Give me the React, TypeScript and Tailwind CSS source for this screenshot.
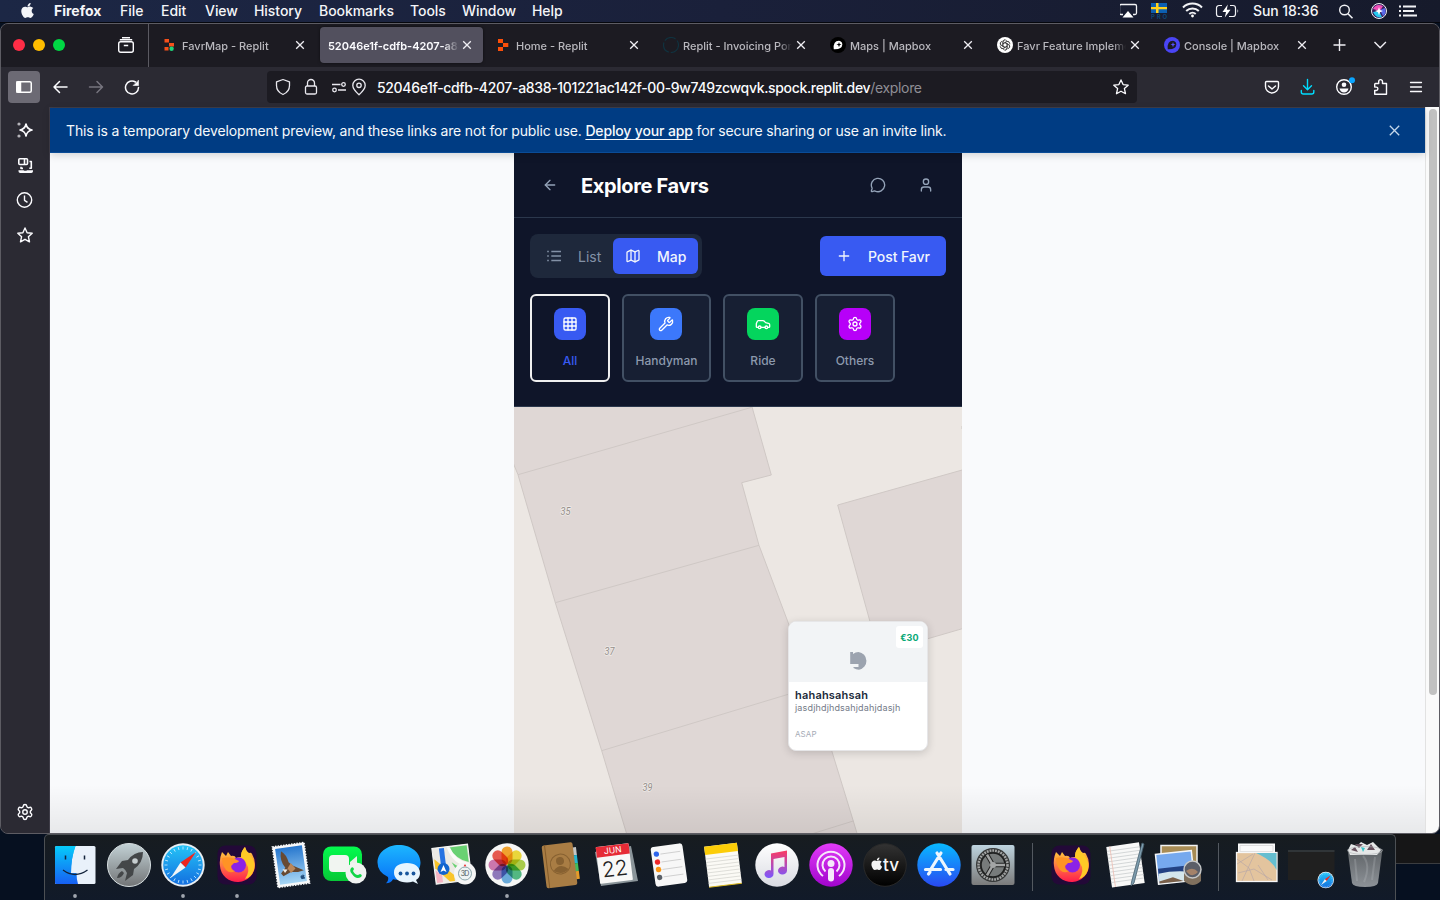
import React from "react";
import { ArrowLeft, Car, Grid3x3, Map as MapIcon, MessageCircle, Plus, Settings, User, Wrench } from "lucide-react";
import { FaApple } from "react-icons/fa";

const menus: [string, string][] = [
  ["File", "w-[41px]"],
  ["Edit", "w-[44px]"],
  ["View", "w-[49px]"],
  ["History", "w-[65px]"],
  ["Bookmarks", "w-[91px]"],
  ["Tools", "w-[52px]"],
  ["Window", "w-[70px]"],
  ["Help", "w-[40px]"],
];

function MenuBar() {
  return (
    <div className="flex h-[23px] shrink-0 items-start border-b border-[#05070d] bg-gradient-to-r from-[#1c2745] via-[#1a203a] to-[#161a2b] text-[14px] font-medium leading-[22px] text-[#f4f5f8]">
      <div className="w-[54px] pl-[19px] pt-[2px]">
        <FaApple size={17} />
      </div>
      <div className="w-[66px] font-bold">Firefox</div>
      {menus.map(([m, w]) => (
        <div key={m} className={`${w} whitespace-nowrap tracking-[-0.050px]`}>{m}</div>
      ))}
      <svg className="ml-auto h-[22px] w-[320px]" viewBox="1120 0 320 22" fill="none" stroke="#f1f2f5">
        <path d="M1123 14.500h-2a1.500 1.500 0 0 1-1.500-1.500V6a1.500 1.500 0 0 1 1.500-1.500h14A1.500 1.500 0 0 1 1136.500 6v7a1.500 1.500 0 0 1-1.500 1.500h-2" strokeWidth="1.300" />
        <path d="M1128 11l5.500 6.500h-11z" fill="#fff" stroke="none" />
        <g stroke="none">
          <rect x="1151" y="3" width="16" height="10" fill="#0c5fb0" />
          <path d="M1151 7h16v2.300h-16zM1156 3h2.500v10h-2.500z" fill="#ffd21c" />
          <text x="1151" y="18.500" fontSize="6" fontWeight="700" fill="#0d4675" textLength="16">PRO</text>
        </g>
        <g strokeWidth="2">
          <path d="M1183 7.500a13.500 13.500 0 0 1 19 0M1186.200 11a9 9 0 0 1 12.600 0M1189.300 14a4.700 4.700 0 0 1 6.400 0" />
          <circle cx="1192.500" cy="16" r="1.400" fill="#fff" stroke="none" />
        </g>
        <path d="M1222 5.500h-3a2.500 2.500 0 0 0-2.500 2.500v6a2.500 2.500 0 0 0 2.500 2.500h3M1230 5.500h3a2.500 2.500 0 0 1 2.500 2.500v6a2.500 2.500 0 0 1-2.500 2.500h-4" strokeWidth="1.200" />
        <path d="M1237.500 9v4q1.500-2 0-4zM1227.800 4.500l-5.300 7.500h3.500l-1.200 5.500 5.700-7.800h-3.700z" fill="#fff" stroke="none" />
        <text x="1253" y="16" fontSize="14" fontWeight="500" fill="#f4f5f8" stroke="none" textLength="65.500">Sun 18:36</text>
        <circle cx="1344.500" cy="10" r="4.800" strokeWidth="1.400" />
        <path d="M1348 13.700l4.500 4.500" strokeWidth="1.600" />
        <circle cx="1379" cy="11" r="7.500" fill="#39205d" strokeWidth="1" />
        <path d="M1373 9q3-6 10-3l-3 5z" fill="#f04fb8" stroke="none" />
        <path d="M1373 12l6-1 3 6q-6 2-9-5z" fill="#26c8ef" stroke="none" />
        <path d="M1380 10l5-2q2 5-2 8z" fill="#5868e8" stroke="none" />
        <path d="M1379 7l1 3 3 1-3 1.200-1 3-1-3-3-1.200 3-1z" fill="#fff" stroke="none" />
        <path d="M1403 6.500h13M1403 11h11M1403 15.500h14" strokeWidth="1.800" />
        <path d="M1399 6.500h2M1399 11h2M1399 15.500h2" strokeWidth="1.800" />
      </svg>
    </div>
  );
}

function CloseX({ className = "" }: { className?: string }) {
  return (
    <svg className={`shrink-0 ${className}`} width="10" height="10" viewBox="0 0 10 10" stroke="#f0eff4" strokeWidth="1.300">
      <path d="M1.200 1.200l7.600 7.600M8.800 1.200L1.200 8.800" />
    </svg>
  );
}

function Favicon({ kind }: { kind: string }) {
  return (
    <svg className="mr-[4px] shrink-0" width="16" height="16" viewBox="0 0 16 16">
      {kind === "favr" && (
        <g>
          <path d="M2.500 2h4.500v3.600H2.500zM7 6h5v3.500H7zM2.500 10h4v3.600h-4z" fill="#f5501b" />
          <circle cx="9.600" cy="11.800" r="2.200" fill="#1fd37a" />
        </g>
      )}
      {kind === "replit" && <path d="M2 2h5v4h5.300v4H7v4H2v-4h5V6H2z" fill="#fb4f0a" />}
      {kind === "ring" && <circle cx="8" cy="8" r="7.500" fill="none" stroke="#10323f" strokeWidth="1.200" strokeDasharray="12 2" />}
      {kind === "mapbox" && (
        <g>
          <circle cx="8" cy="8" r="8" fill="#000" />
          <path d="M3.800 12.200Q2.800 4 9 3.800A3.900 3.900 0 0 1 12.300 7.500Q12 12.600 3.800 12.200z" fill="#fff" />
          <path d="M9 5l.7 1.900 1.800.7-1.800.7L9 10.200l-.7-1.900-1.900-.7 1.900-.7z" fill="#000" />
        </g>
      )}
      {kind === "gpt" && (
        <g>
          <circle cx="8" cy="8" r="8" fill="#fff" />
          <g fill="none" stroke="#333" strokeWidth=".7">
            {[0, 60, 120, 180, 240, 300].map((a) => (
              <path key={a} d="M5.900 9.400V5.200a2.300 2.300 0 0 1 4-1.500M5.900 6.800l3.600-2.100a2.300 2.300 0 0 1 3 .6" transform={`rotate(${a} 8 8)`} />
            ))}
          </g>
        </g>
      )}
      {kind === "console" && (
        <g>
          <circle cx="8" cy="8" r="8" fill="#4a45f5" />
          <path d="M3.800 12.200Q2.800 4 9 3.800A3.900 3.900 0 0 1 12.300 7.500Q12 12.600 3.800 12.200z" fill="#1c1b22" />
          <path d="M9 5l.7 1.900 1.800.7-1.800.7L9 10.200l-.7-1.900-1.900-.7 1.900-.7z" fill="#5752ff" />
        </g>
      )}
    </svg>
  );
}

const tabs = [
  { t: "FavrMap - Replit", k: "favr" },
  { t: "52046e1f-cdfb-4207-a83", k: "" },
  { t: "Home - Replit", k: "replit" },
  { t: "Replit - Invoicing Por", k: "ring" },
  { t: "Maps | Mapbox", k: "mapbox" },
  { t: "Favr Feature Impleme", k: "gpt" },
  { t: "Console | Mapbox", k: "console" },
];

function TabBar() {
  return (
    <div className="flex h-[43px] shrink-0 items-center bg-[#1c1b22]">
      <div className="flex h-full w-[148px] items-center border-r border-[#5b5a62] pb-px pl-[12px]">
        <div className="flex gap-[8px]">
          <i className="size-[12px] rounded-full bg-[#ff2d46]" />
          <i className="size-[12px] rounded-full bg-[#ffbd00]" />
          <i className="size-[12px] rounded-full bg-[#00d844]" />
        </div>
        <svg className="ml-[53px]" width="16" height="16" viewBox="0 0 16 16" fill="none" stroke="#fbfbfe" strokeWidth="1.400">
          <rect x=".7" y="4.700" width="14.600" height="10.600" rx="2" />
          <path d="M1.800 2.700h12.400M4 .7h8M5.800 8.500h4.400" />
        </svg>
      </div>
      <div className="ml-[4px] flex h-full items-center pb-px">
        {tabs.map(({ t, k }) => (
          <div key={t} className="flex h-full w-[167px] shrink-0 items-center pr-[4px]">
            <div className={`flex h-[36px] w-[163px] items-center ${k ? "pl-[9px]" : "rounded-[4px] bg-[#52505e] pl-[8px] shadow-[0_0_3px_#0008]"}`}>
              {k && <Favicon kind={k} />}
              <span className={`mt-[2px] whitespace-nowrap text-[11px] ${k ? "w-[109px] font-medium text-[#b9b8be]" : "w-[131px] font-semibold tracking-[-0.050px] text-[#fbfbfe]"} [mask-image:linear-gradient(to_right,#000_88%,transparent)]`}>{t}</span>
              <CloseX className={k ? "ml-[4px]" : "ml-[3px]"} />
            </div>
          </div>
        ))}
      </div>
      <svg className="mb-px ml-[10px]" width="60" height="14" viewBox="0 0 60 14" fill="none" stroke="#f0eff4" strokeWidth="1.400">
        <path d="M7.500 1v12M1.500 7h12M42.500 4l5.700 5.700L53.900 4" />
      </svg>
    </div>
  );
}

function Toolbar() {
  return (
    <div className="flex h-[40px] shrink-0 items-center bg-[#2b2a33]">
      <div className="ml-[7px] flex h-[32px] w-[32px] items-center justify-center rounded-[4px] bg-[#6c6a74]">
        <svg width="16" height="12" viewBox="0 0 16 12" fill="none" stroke="#fff" strokeWidth="1.500">
          <rect x=".75" y=".75" width="14.500" height="10.500" rx="1.500" />
          <path d="M1 1h3.500v10H1z" fill="#fff" />
        </svg>
      </div>
      <svg className="ml-[12px]" width="88" height="16" viewBox="0 0 88 16" fill="none" stroke="#fbfbfe" strokeWidth="1.500" strokeLinecap="round" strokeLinejoin="round">
        <path d="M15 8H2M7.500 2.500L2 8l5.500 5.500" />
        <path d="M37.500 8h13M45 2.500L50.500 8 45 13.500" stroke="#77757f" />
        <path d="M83.500 3A6.500 6.500 0 1 0 86.500 8.500" />
        <path d="M86.500 1.500v5h-5z" fill="#fbfbfe" strokeWidth=".6" />
      </svg>
      <div className="ml-[127px] flex h-[32px] w-[870px] items-center rounded-[4px] bg-[#1c1b22] pl-[8px] pr-[8px]">
        <svg className="shrink-0" width="92" height="18" viewBox="0 0 92 18" fill="none" stroke="#e9e8ee" strokeWidth="1.300" strokeLinejoin="round">
          <path d="M8 1.500l6.500 2.300v3.700c0 4.500-3 7.500-6.500 9-3.500-1.500-6.500-4.500-6.500-9V3.800z" />
          <rect x="30.500" y="8" width="11" height="8" rx="1.500" />
          <path d="M32.500 8V5a3.500 3.500 0 0 1 7 0v3" />
          <circle cx="68.500" cy="6.500" r="1.800" />
          <circle cx="59.500" cy="12" r="1.800" />
          <path d="M57 6.500h8.500M63 12h8" />
          <path d="M84 16.700c-3.500-3.200-6.200-5.900-6.200-9.300a6.200 6.200 0 0 1 12.400 0c0 3.400-2.700 6.100-6.200 9.300z" />
          <circle cx="84" cy="7.300" r="2.200" />
        </svg>
        <div className="ml-[10px] mt-px whitespace-nowrap text-[14px] font-medium leading-[20px] tracking-[-0.335px] text-[#fbfbfe]">
          52046e1f-cdfb-4207-a838-101221ac142f-00-9w749zcwqvk.spock.replit.dev<span className="font-normal text-[#8f8e95]">/explore</span>
        </div>
        <svg className="ml-auto" width="16" height="16" viewBox="0 0 16 16" fill="none" stroke="#fbfbfe" strokeWidth="1.300" strokeLinejoin="round">
          <path d="M8 .9l2.100 4.700 5.100.6-3.800 3.400 1.100 5.100L8 12.200l-4.500 2.500 1.100-5.100L.8 6.200l5.100-.6z" />
        </svg>
      </div>
      <svg className="ml-[127px]" width="162" height="24" viewBox="1264 75 162 24" fill="none" stroke="#fbfbfe" strokeWidth="1.400" strokeLinejoin="round" strokeLinecap="round">
        <path d="M1266.500 81.500h11q1 0 1 1v4a6.500 6.500 0 0 1-13 0v-4q0-1 1-1zM1268.500 86l3.500 3 3.500-3" />
        <path d="M1307.500 79.500v10M1303.500 85.800l4 4 4-4M1301.300 90.500v1.500q0 2 2 2h8.500q2 0 2-2v-1.500" stroke="#00ddff" />
        <circle cx="1344" cy="87" r="7.300" />
        <g fill="#fbfbfe" stroke="none">
          <circle cx="1344" cy="84.800" r="2.300" />
          <path d="M1339.500 88.500h9q-1 4-4.500 4t-4.500-4z" />
        </g>
        <circle cx="1352" cy="80.200" r="3" fill="#0aa5ff" stroke="none" />
        <path d="M1375.500 83.500h3.200v-2a1.900 1.900 0 0 1 3.800 0v2h4v10.800h-11.800v-3.800h1.500a1.700 1.700 0 0 0 0-3.400h-1.500v-2.600q0-1 .8-1z" />
        <path d="M1410.500 82.500h11M1410.500 87h11M1410.500 91.500h11" strokeWidth="1.300" />
      </svg>
    </div>
  );
}

function Sidebar() {
  return (
    <div className="flex w-[48px] shrink-0 flex-col justify-between bg-[#2b2a33]">
      <svg width="48" height="150" viewBox="1 107 48 150" fill="none" stroke="#fbfbfe" strokeWidth="1.400" strokeLinejoin="round">
        <path d="M26 124q1 5 6 6-5 1-6 6-1-5-6-6 5-1 6-6z" strokeWidth="1.600" />
        <circle cx="19" cy="124" r="1.600" fill="#b5b4ba" stroke="none" />
        <circle cx="19" cy="136" r="1.600" fill="#b5b4ba" stroke="none" />
        <rect x="18.800" y="158.800" width="8.700" height="5.700" rx="1" strokeWidth="1.600" />
        <path d="M24.500 159v5" strokeWidth="1.600" />
        <path d="M29.500 161.500h1.800v6.700h-2M21 166.800v1.600h2" strokeWidth="1.600" />
        <path d="M18.500 170.300h5q1.800 1 3.600 0h5.900v1q0 1.700-1.700 1.700h-11q-1.800 0-1.800-1.700z" fill="#fbfbfe" stroke="none" />
        <circle cx="24.500" cy="200" r="7.200" />
        <path d="M24.500 195.500v4.800l3 2" />
        <path d="M25 228l2.100 4.700 5.100.6-3.800 3.400 1.100 5.100-4.500-2.500-4.500 2.500 1.100-5.100-3.800-3.400 5.100-.6z" />
      </svg>
      <div className="mb-[12px] ml-[15px] text-[#fbfbfe]">
        <Settings size={18} strokeWidth={1.900} />
      </div>
    </div>
  );
}

function Banner() {
  return (
    <div className="z-10 flex h-[45px] shrink-0 items-center border-b border-[#0a4c97] bg-[#003c83] pl-[16px] pr-[25px] text-[14px] leading-[20px] tracking-[-0.148px] text-[#f5f9fc] shadow-[0_2px_8px_rgba(0,0,0,0.16)]">
      <span className="mt-[1px] whitespace-nowrap">
        This is a temporary development preview, and these links are not for public use.{" "}
        <span className="font-medium underline underline-offset-[3px]">Deploy your app</span> for secure sharing or use an invite link.
      </span>
      <svg className="ml-auto" width="11" height="11" viewBox="0 0 11 11" stroke="#c5d8eb" strokeWidth="1.300">
        <path d="M.8.8l9.400 9.400M10.200.8L.8 10.200" />
      </svg>
    </div>
  );
}

const categories = [
  { label: "All", Icon: Grid3x3, box: "bg-[#385af2]", card: "w-[80px] border-[#efefef]", text: "text-[#385af2]" },
  { label: "Handyman", Icon: Wrench, box: "mr-px bg-[#3c78fb]", card: "w-[89px] border-[#425064] bg-[#171f33]", text: "text-[#8c99ad]" },
  { label: "Ride", Icon: Car, box: "bg-[#04d55d]", card: "w-[80px] border-[#425064] bg-[#171f33]", text: "text-[#8c99ad]" },
  { label: "Others", Icon: Settings, box: "bg-[#b700f8]", card: "w-[80px] border-[#425064] bg-[#171f33]", text: "text-[#8c99ad]" },
];

function FavrApp() {
  return (
    <div className="flex w-[448px] shrink-0 flex-col bg-[#0f1529]">
      <div className="flex h-[65px] shrink-0 items-center border-b border-[#2b374c] px-[16px] text-[#94a3b8]">
        <div className="flex w-[40px] justify-center"><ArrowLeft size={16} /></div>
        <h1 className="ml-[11px] mt-[2px] text-[20px] font-bold tracking-[-0.360px] text-white">Explore Favrs</h1>
        <div className="ml-auto flex gap-[8px]">
          <div className="flex w-[40px] justify-center"><MessageCircle size={16} /></div>
          <div className="flex w-[40px] justify-center"><User size={16} /></div>
        </div>
      </div>
      <div className="flex h-[189px] shrink-0 flex-col border-b border-[#2b374c] px-[16px] pt-[16px]">
        <div className="flex items-center justify-between text-[14px] leading-[20px]">
          <div className="flex h-[44px] w-[172px] rounded-[8px] bg-[#1e283b] p-[4px]">
            <div className="flex w-[79px] items-center gap-[16px] pl-[12px] text-[#8391a6]">
              <svg width="16" height="16" viewBox="0 0 16 16" stroke="currentColor" strokeWidth="1.400">
                <path d="M5.300 3.500h9.700M5.300 8h9.700M5.300 12.500h9.700M1.200 3.500h1.600M1.200 8h1.600M1.200 12.500h1.600" />
              </svg>
              <span className="mt-[2px]">List</span>
            </div>
            <div className="flex w-[85px] items-center gap-[16px] rounded-[6px] bg-[#385af2] pl-[12px] text-[#f1f5fc]">
              <MapIcon size={16} /><span className="mt-[2px] font-medium">Map</span>
            </div>
          </div>
          <div className="flex h-[40px] w-[126px] items-center gap-[16px] whitespace-nowrap rounded-[6px] bg-[#385af2] pl-[16px] text-[#f1f5fc]">
            <Plus size={16} /><span className="mt-[2px] font-medium tracking-[-0.080px]">Post Favr</span>
          </div>
        </div>
        <div className="mt-[16px] flex gap-[12px]">
          {categories.map(({ label, Icon, box, card, text }) => (
            <div key={label} className={`flex h-[88px] flex-col items-center rounded-[6px] border-2 pt-[12px] ${card}`}>
              <div className={`flex size-[32px] items-center justify-center rounded-[8px] text-white ${box}`}><Icon size={16} /></div>
              <span className={`mt-[12px] text-[12px] font-medium leading-[18px] ${text}`}>{label}</span>
            </div>
          ))}
        </div>
      </div>
      <div className="relative h-[427px] overflow-hidden">
        <svg width="448" height="427" viewBox="0 0 448 427">
          <rect width="448" height="427" fill="#ece7e3" />
          <g fill="#dfd7d5" stroke="#cfc8c5" strokeWidth="1">
            <path d="M-2-2V52L0 58 4 67.700 41.300 195.700 87.700 343.700 113 428H343.500L339.300 414 317.700 343.700 274.700 217 245 138.300 227.700 75.700 257.300 68 237.500-2z" />
            <path d="M4 67.700L237.700.3M41.300 195.700L245 138.300M87.700 343.700L300 279.500M299 426.500L339.300 414" />
            <path d="M450 62.500L323.700 98 364.700 246 450 221.200z" />
          </g>
          <path d="M448 19v3" stroke="#cfc8c5" />
          <g fontFamily="Roboto, sans-serif" fontStyle="italic" fontSize="10.500" fill="#958f8b" stroke="#efebe8" strokeWidth="1.500" paintOrder="stroke">
            <text x="46.500" y="107.500" textLength="10" lengthAdjust="spacingAndGlyphs">35</text>
            <text x="90.500" y="247.500" textLength="10" lengthAdjust="spacingAndGlyphs">37</text>
            <text x="128.500" y="383.500" textLength="10" lengthAdjust="spacingAndGlyphs">39</text>
          </g>
        </svg>
        <div className="absolute left-[274px] top-[214px] flex h-[130px] w-[140px] flex-col overflow-hidden rounded-[8px] border border-[#e6e6e8] bg-white shadow-[0_2px_8px_rgba(0,0,0,0.16)]">
          <div className="flex h-[60px] shrink-0 justify-center bg-[#f2f4f6] pl-[2px] pt-[29px]">
            <svg width="20" height="20" viewBox="0 0 20 20">
              <path d="M1.200 1H4V3Q6.500 1 9.500 1A9 9 0 0 1 10 18.800Q7 18.800 4.500 17V16H9.500V13H1.200z" fill="#9ca3af" />
            </svg>
          </div>
          <div className="flex flex-col pl-[6px] pt-[6px]">
            <b className="text-[11px] font-semibold leading-[14px] tracking-[0.200px] text-[#202a3a]">hahahsahsah</b>
            <span className="text-[9px] leading-[12px] tracking-[0.160px] text-[#747b88]">jasdjhdjhdsahjdahjdasjh</span>
            <span className="mt-[14px] text-[8px] leading-[12px] tracking-[0.100px] text-[#a5abb6]">ASAP</span>
          </div>
          <div className="absolute right-[4px] top-[4px] flex h-[22px] w-[27px] items-center justify-center rounded-[3px] bg-white pt-[2px] text-[9px] font-bold tracking-[0.200px] text-[#08a875]">€30</div>
        </div>
      </div>
    </div>
  );
}

function Gradients() {
  const g: [string, string, string][] = [
    ["gSafari", "#25c4f7", "#136fe0"],
    ["gRocket", "#c3d2d6", "#727476"],
    ["gFox", "#ffe13a", "#ff1b4c"],
    ["gGreen", "#04fb4e", "#07c837"],
    ["gMsg", "#1cb7ff", "#086ff7"],
    ["gFinder", "#06cbfa", "#1760f3"],
    ["gWhite", "#ffffff", "#d9dbe2"],
    ["gNote", "#fb3b62", "#7a57ff"],
    ["gPod", "#e23bf8", "#a005cc"],
    ["gTv", "#333333", "#000000"],
    ["gStore", "#08b9ff", "#2949f2"],
    ["gSys", "#bdd3de", "#7b7b7b"],
    ["gSky", "#2777ce", "#a7d6f5"],
    ["gBin", "#6d7174", "#a8acb0"],
  ];
  return (
    <svg width="0" height="0" className="absolute">
      <defs>
        {g.map(([id, a, b]) => (
          <linearGradient key={id} id={id} x1="0" y1="0" x2="0" y2="1">
            <stop offset="0" stopColor={a} />
            <stop offset="1" stopColor={b} />
          </linearGradient>
        ))}
      </defs>
    </svg>
  );
}

const Firefox = () => (
  <g>
    <rect x="7.500" y="10.500" width="39" height="39" rx="8" fill="#230938" />
    <path d="M12 17l4 4 2-4 3 4q4-1 5 2 2-1 5-1 0-6 4-10 1 4 4 6 2-1 3 1 3 5 3 10a17.500 17 0 0 1-35 2q-1-7 2-14z" fill="url(#gFox)" />
    <path d="M31 22q0-6 4-10 1 5 5 8 6 6 4 15-3 8-9 9 6-9 1-16-2-4-5-6z" fill="#ffc926" />
    <circle cx="28.500" cy="30" r="7.500" fill="#8b22e6" />
    <path d="M12 23q7-2 13 1l4 2q-1 2-5 2l-3 3q-1 4 4 5-5 3-9-1-4-5-4-12z" fill="#ff9325" />
  </g>
);

const petals: [number, string][] = [
  [0, "#f9a11f"], [45, "#f1db2c"], [90, "#a8cf3f"], [135, "#47b97d"], [180, "#62a9e0"], [225, "#8a72bd"], [270, "#d070ae"], [315, "#ed4e42"],
];
const ticks = [0, 15, 30, 45, 60, 75, 90, 105, 120, 135, 150, 165, 180, 195, 210, 225, 240, 255, 270, 285, 300, 315, 330, 345];

const Compass = () => (
  <g>
    <circle cx="27" cy="30" r="21.700" fill="#e9eef2" />
    <circle cx="27" cy="30" r="19.800" fill="url(#gSafari)" />
    {ticks.map((a) => <path key={a} d="M27 11.500v3" stroke="#cdeeff" strokeWidth=".8" transform={`rotate(${a} 27 30)`} />)}
    <path d="M40 17L29.500 32.500 24.500 27.500z" fill="#f0251d" />
    <path d="M14.500 43L24.500 27.500 29.500 32.500z" fill="#f3f5f6" />
  </g>
);

const dockMain: { n: string; dot?: boolean; el: React.ReactNode }[] = [
  { n: "finder", dot: true, el: (
    <g>
      <rect x="7" y="11" width="40.500" height="38" rx="1.500" fill="#e9f1fa" />
      <path d="M27.500 11H8.500Q7 11 7 12.500v35Q7 49 8.500 49h17q-1.500-5-1.500-11h-1q0-15 4.500-27z" fill="url(#gFinder)" />
      <path d="M27.500 11q-4.500 12-4.500 27h5.500q0 6 1.500 11H20V11z" fill="url(#gFinder)" />
      <path d="M17.500 20.500v4M36.500 20.500v4" stroke="#12233b" strokeWidth="1.500" />
      <path d="M15 35q12 9 24.500 0" fill="none" stroke="#12233b" strokeWidth="1.300" />
    </g>) },
  { n: "launchpad", el: (
    <g>
      <circle cx="27" cy="30" r="21.500" fill="url(#gRocket)" stroke="#d7dfe1" />
      <path d="M41 17q-9 0-15 8l-6 1-6 8 7-1q3 2 4 5l-2 8 8-6 1-6q9-6 9-17z" fill="#444749" />
      <circle cx="33" cy="26" r="2.800" fill="#c7ced0" />
      <path d="M20 36q-4 2-5 7 5 0 7-5z" fill="#444749" />
    </g>) },
  { n: "safari", dot: true, el: <Compass /> },
  { n: "firefox", dot: true, el: <Firefox /> },
  { n: "mail", el: (
    <g transform="rotate(-8 27 30)">
      <rect x="11" y="9.500" width="32" height="41" fill="#f7f8f9" stroke="#f7f8f9" strokeWidth="1.500" strokeDasharray="1.500 1.200" />
      <rect x="13.500" y="12" width="27" height="36" fill="url(#gSky)" />
      <path d="M19 15q5 4 6 12l4 4 10 6-6 1-7-1-8 3-2-3 5-5q-5-8-2-17z" fill="#684a32" />
      <path d="M23 33l4-5 4 6-5 4z" fill="#bb875a" />
      <path d="M18 33l5 1-3 3z" fill="#f0ede6" />
      <FaApple x={34} y={40} size={6} color="#234f7e" />
    </g>) },
  { n: "facetime", el: (
    <g>
      <rect x="5" y="11.500" width="39" height="34.500" rx="8" fill="url(#gGreen)" />
      <rect x="11" y="20" width="20" height="17" rx="4" fill="#f1f5f1" />
      <path d="M32 27l7-6v14l-7-4z" fill="#eaf1eb" />
      <circle cx="38" cy="38" r="10.500" fill="#f0f3f1" />
      <path d="M33 33q2-2 3 1l-1 2q2 4 5 4l2-1q3 1 1 3-5 3-9-3-3-3-1-6z" fill="#12d548" />
    </g>) },
  { n: "messages", el: (
    <g>
      <path d="M27 10c12 0 21.500 7.500 21.500 17.500S39 45 27 45q-3 0-6-.7-2 4-7 4 3-3 2-6.300Q5.500 37 5.500 27.500C5.500 17.500 15 10 27 10z" fill="url(#gMsg)" />
      <path d="M35 28c8 0 13 4 13 10q0 5-4 7l2 4-5-2.500q-3 1-6 1c-8 0-13-4-13-10s5-9.500 13-9.500z" fill="#e8f5fe" />
      <g fill="#18569d"><circle cx="28.500" cy="38.500" r="1.900" /><circle cx="35" cy="38.500" r="1.900" /><circle cx="41.500" cy="38.500" r="1.900" /></g>
    </g>) },
  { n: "maps", el: (
    <g>
      <g transform="rotate(-7 27 30)">
        <rect x="8" y="11" width="36" height="36" fill="#eceae4" stroke="#f8f8f6" />
        <path d="M25 12h18v17q-12-4-18-17z" fill="#69d172" />
        <path d="M23 12h3q4 14 17 18v4q-16-4-20-22z" fill="#fbfbf8" />
        <path d="M26 27q8 8 17 9v8q-13-5-17-17z" fill="#69d172" />
        <path d="M9 22l18 18v6h-5L9 31z" fill="#f9c52a" />
        <path d="M9 33l6 6v7H9z" fill="#f5b4c3" />
        <path d="M15 12h5v22h-5z" fill="#2673e2" />
      </g>
      <circle cx="17.500" cy="34" r="6" fill="#1265ce" />
      <path d="M17.500 30l3 7-3-1.500-3 1.500z" fill="#fff" />
      <circle cx="39" cy="38.500" r="11" fill="#f5f6f6" />
      <circle cx="39" cy="38.500" r="6.500" fill="#eef3f4" stroke="#6e9098" strokeWidth=".8" />
      <text x="34.800" y="41" fontSize="7" fill="#4d555a" textLength="8.500">3D</text>
      <path d="M39 29l1.300 2.200h-2.600z" fill="#e22" />
    </g>) },
  { n: "photos", dot: true, el: (
    <g>
      <circle cx="27" cy="30" r="21.700" fill="#f6f6f5" />
      {petals.map(([a, c]) => (
        <rect key={a} x="21.500" y="11.500" width="11" height="18" rx="5.500" fill={c} className="mix-blend-multiply" opacity=".92" transform={`rotate(${a} 27 30)`} />
      ))}
    </g>) },
  { n: "contacts", el: (
    <g transform="rotate(-7 27 30)">
      <path d="M39 14h5v8h-5z" fill="#c3c7c7" /><path d="M39 22h5v8h-5z" fill="#26b6cf" /><path d="M39 30h5v8h-5z" fill="#43bb5a" /><path d="M39 38h5v8h-5z" fill="#e49b2a" />
      <rect x="10" y="8.500" width="31" height="43" rx="2" fill="#a97d44" />
      <path d="M13 8.500v43" stroke="#845c2b" />
      <circle cx="26.500" cy="29" r="10" fill="none" stroke="#876131" />
      <circle cx="26.500" cy="26" r="4" fill="#876131" />
      <path d="M19 35q7-8 15 0-7 6-15 0z" fill="#876131" />
    </g>) },
  { n: "calendar", el: (
    <g>
      <path d="M7 17l36-6 7 35-37 5z" fill="#8b959a" />
      <g transform="rotate(-7 27 30)">
        <rect x="10" y="10" width="33" height="37" rx="1" fill="#f8f8f7" />
        <path d="M10 10h33v10.500H10z" fill="#e62b36" />
        <text x="26.500" y="18" textAnchor="middle" fontSize="8.500" fill="#fff">JUN</text>
        <text x="26.500" y="41" textAnchor="middle" fontSize="21" fontWeight="300" fill="#222">22</text>
      </g>
    </g>) },
  { n: "reminders", el: (
    <g transform="rotate(-8 27 30)">
      <rect x="11" y="10" width="32" height="40" rx="3" fill="#f7f7f7" />
      <circle cx="16" cy="17.500" r="2.700" fill="#2d64eb" /><circle cx="16" cy="25.500" r="2.700" fill="#f02728" /><circle cx="16" cy="33" r="2.700" fill="#fb9615" /><circle cx="16" cy="41" r="2.700" fill="#5a6068" />
      <path d="M20 18h20M20 26h20M20 33.500h20M20 41h20" stroke="#c2c2c2" strokeWidth=".7" />
    </g>) },
  { n: "notes", el: (
    <g transform="rotate(-7 27 30)">
      <rect x="10.500" y="9.500" width="33" height="41" fill="#fbfaf5" />
      <path d="M10.500 9.500h33V18h-33z" fill="#fccd08" />
      <path d="M10.500 22h33M10.500 25.500h33M10.500 29h33M10.500 32.500h33M10.500 36h33M10.500 39.500h33M10.500 43h33M10.500 46.500h33" stroke="#d4d3ce" strokeWidth=".7" />
      <path d="M10.500 50.500h33" stroke="#d8b51c" />
    </g>) },
  { n: "music", el: (
    <g>
      <circle cx="27" cy="30" r="21.700" fill="url(#gWhite)" />
      <path d="M21 18.500l16-3v20a4.500 4 0 1 1-2.500-3.500V22L23.500 24v15a4.500 4 0 1 1-2.500-3.500z" fill="url(#gNote)" />
    </g>) },
  { n: "podcasts", el: (
    <g>
      <circle cx="27" cy="30" r="21.700" fill="url(#gPod)" />
      <g fill="none" stroke="#f6e9fa" strokeWidth="2">
        <path d="M19 41a13.500 13.500 0 1 1 16 0" /><path d="M21.500 36.500a8.500 8.500 0 1 1 11 0" />
      </g>
      <circle cx="27" cy="28.500" r="3.500" fill="#f6e9fa" /><rect x="24" y="33" width="6" height="13.500" rx="3" fill="#f6e9fa" />
    </g>) },
  { n: "tv", el: (
    <g>
      <circle cx="27" cy="30" r="21.300" fill="url(#gTv)" stroke="#292929" />
      <FaApple x={11.500} y={21.500} size={14.500} color="#f6f6f6" />
      <text x="25" y="35.500" fontSize="17" fontWeight="500" fill="#f6f6f6" textLength="16" lengthAdjust="spacingAndGlyphs">tv</text>
    </g>) },
  { n: "store", el: (
    <g>
      <circle cx="27" cy="30" r="21.700" fill="url(#gStore)" />
      <path d="M29 18L19 34M16.500 39l1.500-2M25 18l13 21M13.500 34.500h15M34 34.500h7" stroke="#edf6fd" strokeWidth="3.200" strokeLinecap="round" />
    </g>) },
  { n: "system", el: (
    <g>
      <rect x="5.500" y="10" width="43" height="40" rx="2" fill="url(#gSys)" />
      <circle cx="27" cy="30" r="17" fill="#353737" />
      <circle cx="27" cy="30" r="14.500" fill="none" stroke="#a4a6a6" strokeWidth="2.500" strokeDasharray="1.800 1" />
      <circle cx="27" cy="30" r="12" fill="#777b7b" stroke="#1f2020" strokeWidth="1.500" />
      <g stroke="#232424" strokeWidth="4.500"><path d="M27 30h12M27 30l-6-10.400M27 30l-6 10.400" /></g>
      <g stroke="#a3a5a5" strokeWidth="2.500"><path d="M27 30h12M27 30l-6-10.400M27 30l-6 10.400" /></g>
      <circle cx="27" cy="30" r="3" fill="#a3a5a5" />
    </g>) },
];

const dockApps: { n: string; dot?: boolean; el: React.ReactNode }[] = [
  { n: "firefox2", el: <Firefox /> },
  { n: "textedit", el: (
    <g>
      <g transform="rotate(-8 27 30)">
        <rect x="11" y="9.500" width="33" height="41" fill="#f8f8f7" />
        <path d="M11 14h33M11 17.500h33M11 21h33M11 24.500h33M11 28h33M11 31.500h33M11 35h33M11 38.500h33M11 42h33M11 45.500h33" stroke="#c6cacb" strokeWidth=".7" />
        <path d="M14.500 9.500v41" stroke="#edb8ac" strokeWidth=".7" />
      </g>
      <path d="M44 8l2 1-10 39-3 3 .5-4z" fill="#7e9dae" stroke="#47606e" strokeWidth=".8" />
    </g>) },
  { n: "preview", el: (
    <g>
      <rect x="9" y="10.500" width="36" height="28" fill="#a88c55" stroke="#f2f2f2" strokeWidth="1.500" />
      <g transform="rotate(-6 22 33)">
        <rect x="5" y="17.500" width="36" height="30" fill="#76a9ee" stroke="#f6f7f8" strokeWidth="1.500" />
        <path d="M6 32h34v7H6z" fill="#234283" /><path d="M6 37q17-2 34 2v8H6z" fill="#d4e6ed" /><path d="M6 45l14-3 10 5H6z" fill="#795f49" />
      </g>
      <path d="M32 35h17v11q-8 8-17 0z" fill="#80705e" />
      <circle cx="40.500" cy="34.500" r="8.500" fill="#5b5e68" stroke="#c6c8c9" strokeWidth="1.500" />
      <path d="M34 36q7-5 12 1-6 7-12-1z" fill="#a4826a" />
    </g>) },
];

const dockFiles: { n: string; dot?: boolean; el: React.ReactNode }[] = [
  { n: "download", el: (
    <g>
      <rect x="8" y="8.500" width="37" height="24" fill="#fafafa" />
      <path d="M10 10.500h33v6H10z" fill="none" stroke="#dedede" />
      <rect x="6.500" y="17.500" width="40.500" height="29" fill="#e3c49e" stroke="#f7f7f7" strokeWidth="1.300" />
      <path d="M26 18h20.500v17Q42 25 26 18z" fill="#65bed0" />
      <path d="M7 24l12 9 5 13M12 46l13-28M8 38l16-4 18 11M28 30l10 15M7 29l16-10" fill="none" stroke="#b3a5a8" strokeWidth=".6" />
    </g>) },
  { n: "minimised", el: (
    <g>
      <rect x="4" y="15" width="46.500" height="30" fill="#202020" /><path d="M4 16h46.500" stroke="#363c40" strokeWidth="1.500" />
      <g transform="translate(31.500 33.700) scale(.38)"><Compass /></g>
    </g>) },
  { n: "bin", el: (
    <g>
      <path d="M9.500 14l4.500 34q1 4 13 4t13-4l4.500-34z" fill="url(#gBin)" opacity=".82" />
      <path d="M10 15l3-6 6 2 4-4 6 3 6-3 4 4 4 4-4 5H12z" fill="#e6e8e8" />
      <path d="M17 9l4 4 4-4M29 15l4-6 4 6M13 15l4-3 3 5z" fill="#654f5c" /><path d="M23 12l4 1-2 4z" fill="#3cc4c8" />
      <ellipse cx="27" cy="15.500" rx="17.500" ry="4" fill="none" stroke="#aeb2b5" strokeWidth=".6" />
      <path d="M17 24l2 22M25 21q8 9 1 26M37 22l-3 23" stroke="#c0c5c8" opacity=".25" fill="none" strokeWidth="2" />
    </g>) },
];

function DockGroup({ items }: { items: { n: string; dot?: boolean; el: React.ReactNode }[] }) {
  return (
    <div className="flex">
      {items.map(({ n, dot, el }) => (
        <svg key={n} width="54" height="64" viewBox="0 0 54 64" className="shrink-0 isolate">
          {el}
          {dot && <circle cx="27" cy="61" r="1.900" fill="#a0a5ae" />}
        </svg>
      ))}
    </div>
  );
}

function Dock() {
  return (
    <div className="absolute bottom-0 left-[44px] flex h-[66px] w-[1352px] rounded-t-[5px] border border-b-0 border-[#4c5054] bg-gradient-to-b from-[#171c20] to-[#111a29] pl-[3px]">
      <DockGroup items={dockMain} />
      <div className="mx-[11.500px] mt-[8px] h-[48px] w-px bg-[#535960]" />
      <DockGroup items={dockApps} />
      <div className="mx-[11.500px] mt-[8px] h-[48px] w-px bg-[#535960]" />
      <DockGroup items={dockFiles} />
    </div>
  );
}

export default function App() {
  return (
    <div className="relative flex h-[900px] w-[1440px] flex-col overflow-hidden bg-[#061020] font-['Inter',sans-serif]">
      <Gradients />
      <MenuBar />
      <div className="z-[1] flex h-[811px] shrink-0 flex-col overflow-hidden rounded-[8px] border border-[#5d5c63] bg-[#2b2a33]">
        <TabBar />
        <Toolbar />
        <div className="flex min-h-0 flex-1">
          <Sidebar />
          <div className="flex w-[1376px] shrink-0 flex-col border-l border-t border-[#3f3d48] bg-[#f9fafc]">
            <Banner />
            <div className="relative flex min-h-0 flex-1 pl-[464px]">
              <FavrApp />
              <div className="pointer-events-none absolute inset-x-0 bottom-0 h-[48px] bg-gradient-to-t from-black/7 to-transparent" />
            </div>
          </div>
          <div className="flex flex-1 justify-center border-l border-[#e2e2e2] bg-[#fafafa] pt-[2px]">
            <div className="h-[586px] w-[8px] rounded-full bg-[#c1c1c1]" />
          </div>
        </div>
      </div>
      <div className="ml-auto h-[30px] w-[60px] shrink-0 border-b border-[#3b3d40] bg-[#161617]" />
      <div className="absolute inset-x-0 bottom-0 z-[2]">
        <Dock />
      </div>
    </div>
  );
}
